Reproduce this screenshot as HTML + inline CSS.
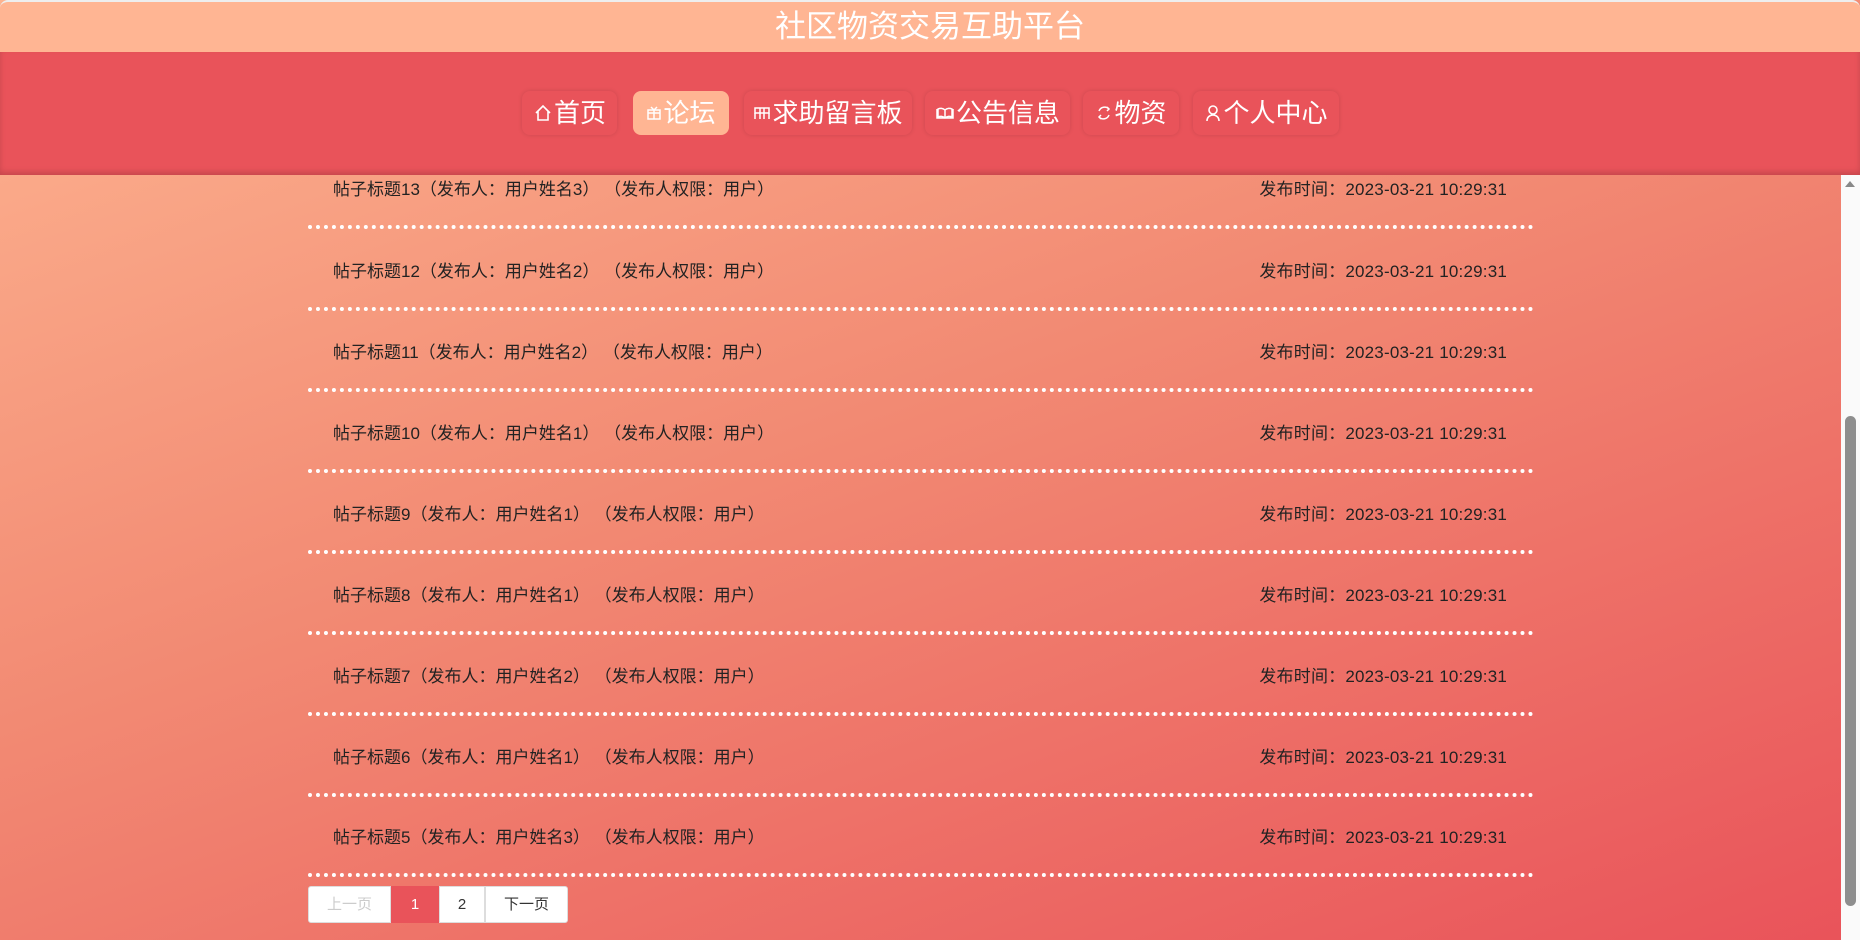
<!DOCTYPE html>
<html><head><meta charset="utf-8"><style>
*{margin:0;padding:0;box-sizing:border-box}
body{width:1860px;height:940px;overflow:hidden;position:relative;font-family:"Liberation Sans","Noto Sans CJK SC",sans-serif;background:linear-gradient(160deg,#fdb390 0%,#f28a73 45%,#e9535a 100%)}
.top{position:absolute;left:0;top:0;width:1860px;height:52px;background:#ffb593;border-top:2px solid #eee;border-radius:8px 8px 0 0;text-align:center;color:#fff;font-size:31px;line-height:50px}
.nav{position:absolute;left:0;top:52px;width:1860px;height:123px;background:#e9535a;box-shadow:0 -3px 6px rgba(0,0,0,.15) inset}
.b{position:absolute;top:39px;height:44px;border-radius:8px;background:#e9535a;box-shadow:0 0 5px rgba(0,0,0,.12);color:#fff;font-size:26px;line-height:44px;text-align:center;white-space:nowrap}
.b.on{background:#ffb593;box-shadow:none}
.b svg{vertical-align:middle;margin-right:1px;margin-top:-4px}
.row{position:absolute;left:308px;width:1226px;height:81px;border-bottom:4px dotted #fff;font-size:17px;color:#222}
.row .l{position:absolute;left:25px;top:0}
.row .r{position:absolute;right:27px;top:0;letter-spacing:.2px}
.pg{position:absolute;top:886px;height:37px;background:#fff;border:1px solid #ddd;font-size:15px;line-height:35px;text-align:center;color:#333}
.sb{position:absolute;left:1841px;top:175px;width:19px;height:765px;background:#fafafa}
.th{position:absolute;left:1845px;top:416px;width:11px;height:490px;background:#8e8e8e;border-radius:6px}
.ar{position:absolute;left:1845px;top:181px;width:0;height:0;border-left:5px solid transparent;border-right:5px solid transparent;border-bottom:6px solid #888}
</style></head><body>
<div class="top">社区物资交易互助平台</div>
<div class="nav">
<div class="b" style="left:522px;width:95px"><svg width="20" height="20" viewBox="0 0 20 20" fill="none" stroke="#fff" stroke-width="1.6"><path d="M3 10L10 3l7 7M5 8v9h10V8"/></svg>首页</div>
<div class="b on" style="left:633px;width:96px"><svg width="16" height="16" viewBox="0 0 16 16" fill="none" stroke="#fff" stroke-width="1.5"><rect x="2" y="5" width="12" height="9"/><path d="M2 8h12M8 5v9M5 2l3 3 3-3"/></svg>论坛</div>
<div class="b" style="left:744px;width:168px"><svg width="18" height="16" viewBox="0 0 18 16" fill="none" stroke="#fff" stroke-width="1.5"><rect x="2" y="3" width="14" height="5"/><path d="M2 8v6M7 3v11M11 3v11M16 8v6"/></svg>求助留言板</div>
<div class="b" style="left:925px;width:145px"><svg width="20" height="16" viewBox="0 0 20 16" fill="none" stroke="#fff" stroke-width="1.5"><path d="M2 4v9h16V4M10 5c-2-2-5-2-7-1v8c2-1 5-1 7 1 2-2 5-2 7-1V4c-2-1-5-1-7 1zM10 5v8"/></svg>公告信息</div>
<div class="b" style="left:1083px;width:96px"><svg width="18" height="18" viewBox="0 0 18 18" fill="none" stroke="#fff" stroke-width="1.5"><path d="M4 7a6 6 0 0 1 10-2M14 11a6 6 0 0 1-10 2M12 3l2 2-2 2M6 15l-2-2 2-2"/></svg>物资</div>
<div class="b" style="left:1193px;width:146px"><svg width="18" height="18" viewBox="0 0 18 18" fill="none" stroke="#fff" stroke-width="1.6"><circle cx="9" cy="6" r="4"/><path d="M3 17c0-4 3-6 6-6s6 2 6 6"/></svg>个人中心</div>
</div>
<div class="row" style="top:148px"><span class="l" style="top:27px">帖子标题13（发布人：用户姓名3） （发布人权限：用户）</span><span class="r" style="top:27px">发布时间：2023-03-21 10:29:31</span></div>
<div class="row" style="top:230px"><span class="l" style="top:27px">帖子标题12（发布人：用户姓名2） （发布人权限：用户）</span><span class="r" style="top:27px">发布时间：2023-03-21 10:29:31</span></div>
<div class="row" style="top:311px"><span class="l" style="top:27px">帖子标题11（发布人：用户姓名2） （发布人权限：用户）</span><span class="r" style="top:27px">发布时间：2023-03-21 10:29:31</span></div>
<div class="row" style="top:392px"><span class="l" style="top:27px">帖子标题10（发布人：用户姓名1） （发布人权限：用户）</span><span class="r" style="top:27px">发布时间：2023-03-21 10:29:31</span></div>
<div class="row" style="top:473px"><span class="l" style="top:27px">帖子标题9（发布人：用户姓名1） （发布人权限：用户）</span><span class="r" style="top:27px">发布时间：2023-03-21 10:29:31</span></div>
<div class="row" style="top:554px"><span class="l" style="top:27px">帖子标题8（发布人：用户姓名1） （发布人权限：用户）</span><span class="r" style="top:27px">发布时间：2023-03-21 10:29:31</span></div>
<div class="row" style="top:635px"><span class="l" style="top:27px">帖子标题7（发布人：用户姓名2） （发布人权限：用户）</span><span class="r" style="top:27px">发布时间：2023-03-21 10:29:31</span></div>
<div class="row" style="top:716px"><span class="l" style="top:27px">帖子标题6（发布人：用户姓名1） （发布人权限：用户）</span><span class="r" style="top:27px">发布时间：2023-03-21 10:29:31</span></div>
<div class="row" style="top:796px"><span class="l" style="top:27px">帖子标题5（发布人：用户姓名3） （发布人权限：用户）</span><span class="r" style="top:27px">发布时间：2023-03-21 10:29:31</span></div>
<div class="pg" style="left:308px;width:83px;color:#ccc;border-radius:3px 0 0 3px">上一页</div>
<div class="pg" style="left:391px;width:48px;background:#e9535a;border-color:#e9535a;color:#fff">1</div>
<div class="pg" style="left:439px;width:46px">2</div>
<div class="pg" style="left:485px;width:83px;border-radius:0 3px 3px 0">下一页</div>
<div class="sb"></div><div class="ar"></div><div class="th"></div>
</body></html>
